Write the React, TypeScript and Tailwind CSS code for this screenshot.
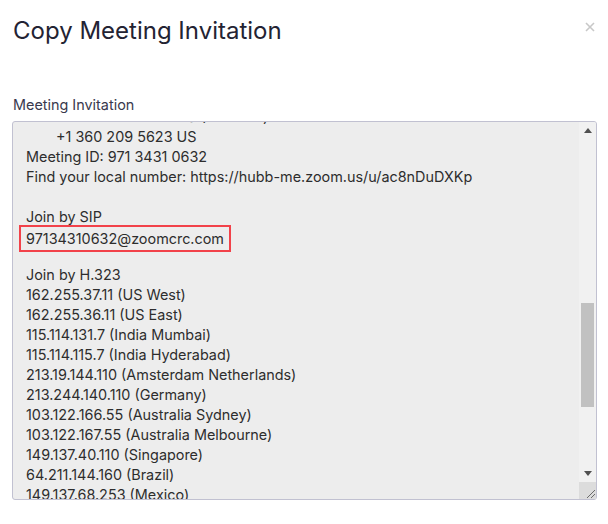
import React from "react";

const lines: { text: string; indent?: boolean; boxed?: boolean }[] = [
  { text: "+1 646 558 8656 US (Houston)", indent: true },
  { text: "+1 360 209 5623 US", indent: true },
  { text: "Meeting ID: 971 3431 0632" },
  { text: "Find your local number: https://hubb-me.zoom.us/u/ac8nDuDXKp" },
  { text: "" },
  { text: "Join by SIP" },
  { text: "97134310632@zoomcrc.com", boxed: true },
  { text: "" },
  { text: "Join by H.323" },
  { text: "162.255.37.11 (US West)" },
  { text: "162.255.36.11 (US East)" },
  { text: "115.114.131.7 (India Mumbai)" },
  { text: "115.114.115.7 (India Hyderabad)" },
  { text: "213.19.144.110 (Amsterdam Netherlands)" },
  { text: "213.244.140.110 (Germany)" },
  { text: "103.122.166.55 (Australia Sydney)" },
  { text: "103.122.167.55 (Australia Melbourne)" },
  { text: "149.137.40.110 (Singapore)" },
  { text: "64.211.144.160 (Brazil)" },
  { text: "149.137.68.253 (Mexico)" },
];

export default function App() {
  return (
    <div className="w-[608px] h-[524px] bg-white px-[12px] font-['Inter',sans-serif] text-[#2d2d2d]">
      <div className="flex items-start justify-between pt-[16px]">
        <h1 className="text-[24px] leading-[30px] text-[#232333] pl-[1px]">Copy Meeting Invitation</h1>
        <svg className="mt-[6px] mr-[1px]" width="10" height="10" viewBox="0 0 10 10">
          <path d="M1 1 L9 9 M9 1 L1 9" stroke="#c8c8c8" strokeWidth="1.6" />
        </svg>
      </div>

      <div className="mt-[49px] text-[14.4px] leading-[20px] pl-[1px] text-[#39394d]">Meeting Invitation</div>

      <div className="mt-[6px] h-[379px] w-[585px] border border-[#c1c1d1] rounded-[3px] bg-[#ededed] flex overflow-hidden">
        <div className="flex-1 overflow-hidden pl-[13px]">
          <div className="-mt-[15px] text-[14.4px] leading-[20px]">
            {lines.map((l, i) => (
              <div key={i} className={`h-[20px] whitespace-pre ${l.indent ? "pl-[30px]" : ""}`}>
                {l.boxed ? (
                  <div className="w-fit -ml-[7px] -mt-[2px] pl-[5px] pr-[5px] border-2 border-[#f2424a] leading-[23px]">
                    {l.text}
                  </div>
                ) : (
                  l.text
                )}
              </div>
            ))}
          </div>
        </div>

        <div className="w-[17px] flex flex-col bg-[#f1f1f1]">
          <div className="h-[17px] flex items-center justify-center">
            <svg width="8" height="5" viewBox="0 0 8 5">
              <path d="M0 5 L4 0 L8 5 Z" fill="#505050" />
            </svg>
          </div>
          <div className="flex-1 px-[2px] pt-[164px]">
            <div className="h-[104px] bg-[#c1c1c1]" />
          </div>
          <div className="h-[17px] flex items-center justify-center">
            <svg width="8" height="5" viewBox="0 0 8 5">
              <path d="M0 0 L8 0 L4 5 Z" fill="#505050" />
            </svg>
          </div>
          <div className="h-[17px] bg-[#dcdcdc] flex items-end justify-end">
            <svg width="12" height="12" viewBox="0 0 12 12">
              <path d="M3 11 L11 3 M7 11 L11 7" stroke="#6b6b6b" strokeWidth="1" />
            </svg>
          </div>
        </div>
      </div>
    </div>
  );
}
